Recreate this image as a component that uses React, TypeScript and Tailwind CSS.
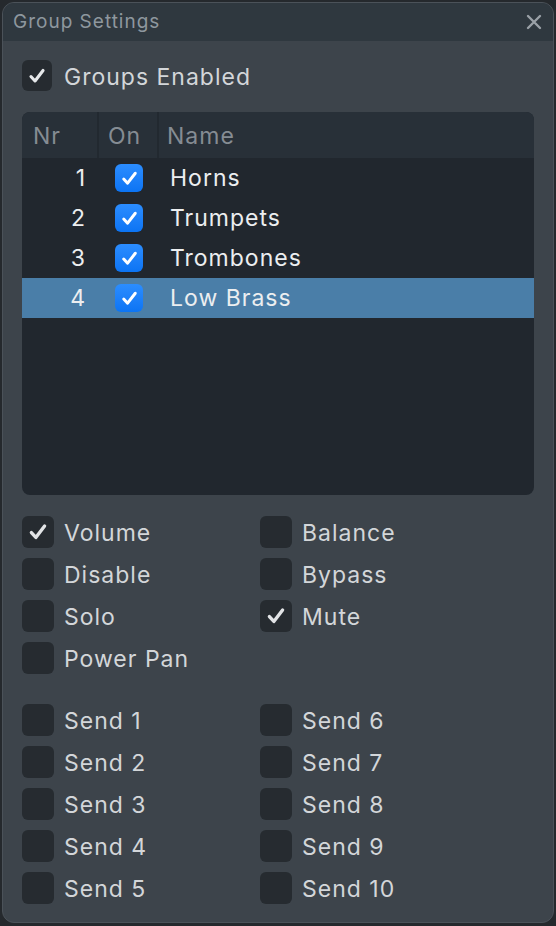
import React from 'react';

const font = { fontFamily: 'Inter, "Noto Sans", "Liberation Sans", sans-serif' };

const groups = [
  { nr: 1, name: 'Horns', selected: false },
  { nr: 2, name: 'Trumpets', selected: false },
  { nr: 3, name: 'Trombones', selected: false },
  { nr: 4, name: 'Low Brass', selected: true },
];

function Check({ className }: { className: string }) {
  return (
    <svg viewBox="0 0 20 20" className={className} fill="none">
      <path d="M4.5 10.5 L8.2 14.5 L15.5 5" stroke="currentColor" strokeWidth="2.8" strokeLinecap="round" strokeLinejoin="round" />
    </svg>
  );
}

function Box({ checked }: { checked?: boolean }) {
  return (
    <div className="w-[32px] h-[32px] rounded-[6px] bg-[#262b30] flex items-center justify-center shrink-0 text-[#e2e4e6]">
      {checked && <Check className="w-[24px] h-[24px]" />}
    </div>
  );
}

function Option({ label, checked }: { label: string; checked?: boolean }) {
  return (
    <div className="flex items-center gap-[10px] h-[32px]">
      <Box checked={checked} />
      <span className="text-[23px] tracking-[1px] text-[#d3d6d9] leading-none pt-[2px]">{label}</span>
    </div>
  );
}

export default function App() {
  return (
    <div className="w-[556px] h-[926px] bg-[#25292d] pt-[2px] pl-[2px]" style={font}>
      <div className="w-[552px] h-[921px] rounded-[12px] border border-[#4b5259] bg-[#3d444b] overflow-hidden flex flex-col">
        {/* title bar */}
        <div className="h-[38px] bg-[#2f383f] flex items-center justify-between pl-[10px] pr-[11px] shrink-0">
          <span className="text-[19px] tracking-[1px] text-[#8e979e]">Group Settings</span>
          <svg viewBox="0 0 16 16" className="w-[16px] h-[16px] text-[#9aa1a7]">
            <path d="M2 2 L14 14 M14 2 L2 14" stroke="currentColor" strokeWidth="2.4" strokeLinecap="round" />
          </svg>
        </div>

        <div className="px-[19px] pt-[19px]">
          <div className="flex items-center gap-[12px] h-[31px]">
            <div className="w-[30px] h-[31px] rounded-[6px] bg-[#262b30] flex items-center justify-center text-[#e6e8ea]">
              <Check className="w-[22px] h-[22px]" />
            </div>
            <span className="text-[23px] tracking-[1px] text-[#d3d6d9] pt-[3px]">Groups Enabled</span>
          </div>

          {/* group table */}
          <div className="mt-[21px] h-[383px] rounded-[8px] bg-[#21272e] overflow-hidden">
            <div className="h-[46px] bg-[#283038] flex text-[23px] tracking-[1px] text-[#858c93]">
              <div className="w-[77px] pl-[11px] pt-[2px] flex items-center border-r-2 border-[#222930]">Nr</div>
              <div className="w-[60px] pl-[9px] pt-[2px] flex items-center border-r-2 border-[#222930]">On</div>
              <div className="flex-1 pl-[8px] pt-[2px] flex items-center">Name</div>
            </div>
            {groups.map((g) => (
              <div key={g.nr} className={`h-[40px] flex items-center text-[23px] tracking-[1px] text-[#eceef0] ${g.selected ? 'bg-[#4a7ea8]' : ''}`}>
                <div className="w-[77px] pr-[13px] text-right">{g.nr}</div>
                <div className="w-[60px] flex justify-center">
                  <div className="w-[28px] h-[28px] rounded-[6px] bg-gradient-to-b from-[#2b8dff] to-[#0b74f4] flex items-center justify-center text-white">
                    <Check className="w-[21px] h-[21px]" />
                  </div>
                </div>
                <div className="flex-1 pl-[11px]">{g.name}</div>
              </div>
            ))}
          </div>

          {/* options */}
          <div className="mt-[21px] grid grid-cols-[238px_1fr] gap-y-[10px]">
            <Option label="Volume" checked />
            <Option label="Balance" />
            <Option label="Disable" />
            <Option label="Bypass" />
            <Option label="Solo" />
            <Option label="Mute" checked />
            <Option label="Power Pan" />
          </div>

          <div className="mt-[30px] grid grid-cols-[238px_1fr] gap-y-[10px]">
            {[1, 6, 2, 7, 3, 8, 4, 9, 5, 10].map((n) => (
              <Option key={n} label={`Send ${n}`} />
            ))}
          </div>
        </div>
      </div>
    </div>
  );
}
